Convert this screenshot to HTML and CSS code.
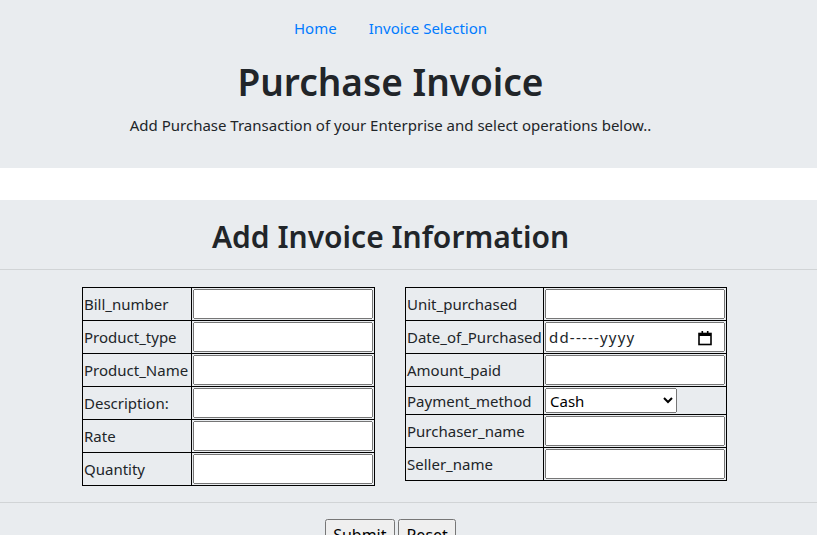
FILE: index.html
```html
<!DOCTYPE html>
<html>
<head>
<meta charset="utf-8">
<title>Purchase Invoice</title>
<link rel="stylesheet" href="styles.css">
</head>
<body>
<header class="jumbo">
  <nav class="nav">
    <a class="nav-link" href="#">Home</a>
    <a class="nav-link" href="#">Invoice Selection</a>
  </nav>
  <h1 class="title">Purchase Invoice</h1>
  <p class="subtitle">Add Purchase Transaction of your Enterprise and select operations below..</p>
</header>
<section class="panel">
  <h2 class="panel-title">Add Invoice Information</h2>
  <hr class="rule">
  <form class="form">
    <div class="tables">
      <table class="grid grid-left">
        <tr><td class="lbl">Bill_number</td><td class="fld"><input type="text"></td></tr>
        <tr><td class="lbl">Product_type</td><td class="fld"><input type="text"></td></tr>
        <tr><td class="lbl">Product_Name</td><td class="fld"><input type="text"></td></tr>
        <tr><td class="lbl">Description:</td><td class="fld"><input type="text"></td></tr>
        <tr><td class="lbl">Rate</td><td class="fld"><input type="text"></td></tr>
        <tr><td class="lbl">Quantity</td><td class="fld"><input type="text"></td></tr>
      </table>
      <table class="grid grid-right">
        <tr><td class="lbl">Unit_purchased</td><td class="fld"><input type="text"></td></tr>
        <tr><td class="lbl">Date_of_Purchased</td><td class="fld">
          <div class="date">
            <input type="text" class="date-input" placeholder="dd-----yyyy">
            <svg class="cal" width="16" height="16" viewBox="0 0 16 16" aria-hidden="true">
              <rect x="2" y="3.5" width="12" height="11" fill="none" stroke="#000" stroke-width="1.6"/>
              <rect x="2" y="3" width="12" height="3" fill="#000"/>
              <rect x="4.5" y="1" width="1.6" height="3" fill="#000"/>
              <rect x="9.9" y="1" width="1.6" height="3" fill="#000"/>
            </svg>
          </div>
        </td></tr>
        <tr><td class="lbl">Amount_paid</td><td class="fld"><input type="text"></td></tr>
        <tr><td class="lbl">Payment_method</td><td class="fld"><select class="sel"><option>Cash</option><option>Card</option></select></td></tr>
        <tr><td class="lbl">Purchaser_name</td><td class="fld"><input type="text"></td></tr>
        <tr><td class="lbl">Seller_name</td><td class="fld"><input type="text"></td></tr>
      </table>
    </div>
    <hr class="rule rule-bottom">
    <div class="buttons">
      <button type="submit" class="btn">Submit</button>
      <button type="reset" class="btn">Reset</button>
    </div>
  </form>
</section>
</body>
</html>
```
FILE: styles.css
```css
* { box-sizing: border-box; }
html, body { margin: 0; padding: 0; }
body {
  font-family: "Segoe UI", "Noto Sans", "Open Sans", sans-serif;
  font-size: 15px;
  line-height: 24px;
  color: #212529;
  background: #fff;
}
.jumbo {
  background: #e9ecef;
  padding: 8px 36px 31px 0;
  margin-bottom: 32px;
  text-align: center;
}
.nav {
  display: flex;
  justify-content: center;
}
.nav-link {
  color: #007bff;
  text-decoration: none;
  padding: 8px 16px;
}
.title {
  margin: 10px 0 7px;
  font-size: 37px;
  font-weight: 600;
  line-height: 48px;
}
.subtitle { margin: 0; }
.panel {
  background: #e9ecef;
  padding-top: 18px;
  min-height: 335px;
}
.panel-title {
  margin: 0 36px 0 0;
  text-align: center;
  font-size: 30px;
  font-weight: 600;
  line-height: 38px;
}
.rule {
  border: 0;
  border-top: 1px solid rgba(0,0,0,.1);
  margin: 13px 0 17px;
}
.rule-bottom { margin: 16px 0 16px; }
.tables {
  display: flex;
  justify-content: center;
  align-items: flex-start;
  gap: 30px;
  padding-right: 8px;
}
.grid {
  border-collapse: collapse;
  border: 1px solid #000;
}
.grid td {
  border: 1px solid #000;
  padding: 1px;
  vertical-align: middle;
  white-space: nowrap;
}
.grid-left .lbl { width: 109px; }
.grid-right .lbl { width: 138px; }
.fld input[type="text"] {
  width: 180px;
  height: 30px;
  font: inherit;
  display: block;
}
.date {
  position: relative;
  width: 174px;
}
.fld .date-input {
  width: 174px;
  height: 31px;
  padding-right: 28px;
  letter-spacing: 1.2px;
}
.date-input::placeholder { color: #212529; opacity: 1; }
.cal {
  position: absolute;
  right: 6px;
  top: 8px;
}
.fld .sel {
  width: 132px;
  height: 25px;
  font: inherit;
  line-height: 1.2;
  display: block;
}
.buttons {
  text-align: center;
  padding-right: 36px;
}
.btn {
  font: inherit;
  font-size: 16px;
  padding: 2px 6px;
}
```
